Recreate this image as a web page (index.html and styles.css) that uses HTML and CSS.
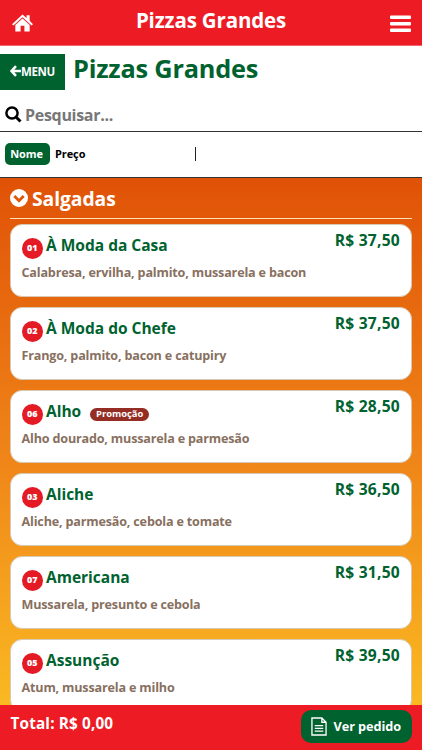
FILE: index.html
```html
<!DOCTYPE html>
<html lang="pt-BR">
<head>
<meta charset="utf-8">
<title>Pizzas Grandes</title>
<link rel="stylesheet" href="styles.css">
</head>
<body>
<header class="topbar">
  <svg class="home" viewBox="0 0 22 18"><path fill="#fff" d="M11 0 15.300 3.700V1H18.500V6.700L22 10.200 20.500 11.600 11 3 1.500 11.600 0 10.200ZM11 4.300 18.500 11.200V18H13V12H9V18H3.500V11.200Z"/></svg>
  <span class="topbar-title">Pizzas Grandes</span>
  <svg class="bars" viewBox="0 0 21 18"><path fill="#fff" d="M1 .5H20a1 1 0 0 1 1 1V3a1 1 0 0 1-1 1H1a1 1 0 0 1-1-1V1.500a1 1 0 0 1 1-1ZM1 7H20a1 1 0 0 1 1 1V9.500a1 1 0 0 1-1 1H1a1 1 0 0 1-1-1V8a1 1 0 0 1 1-1ZM1 13.500H20a1 1 0 0 1 1 1V16a1 1 0 0 1-1 1H1a1 1 0 0 1-1-1V14.500a1 1 0 0 1 1-1Z"/></svg>
</header>
<div class="heading">
  <a class="back"><svg viewBox="0 0 11 12"><path d="M6 1.200 1.500 6 6 10.800M2 6H11" fill="none" stroke="#fff" stroke-width="2.500"/></svg><span>MENU</span></a>
  <h1>Pizzas Grandes</h1>
</div>
<div class="search">
  <svg viewBox="0 0 17 17"><circle cx="7" cy="7" r="5.600" fill="none" stroke="#000" stroke-width="2.500"/><path d="M11 11 15.500 15.500" stroke="#000" stroke-width="3"/></svg>
  <span>Pesquisar...</span>
</div>
<div class="sort"><span class="chip">Nome</span><span class="sort-option">Preço</span><i class="divider"></i></div>
<main class="list">
  <h2 class="section"><svg viewBox="0 0 18 18"><circle cx="9" cy="9" r="9" fill="#fff"/><path d="M4.300 7 9 11.700 13.700 7" fill="none" stroke="#e0560a" stroke-width="2.800"/></svg><span>Salgadas</span></h2>
  <article class="card"><div class="row"><b class="num">01</b><h3>À Moda da Casa</h3><span class="price">R$ 37,50</span></div><p>Calabresa, ervilha, palmito, mussarela e bacon</p></article>
  <article class="card"><div class="row"><b class="num">02</b><h3>À Moda do Chefe</h3><span class="price">R$ 37,50</span></div><p>Frango, palmito, bacon e catupiry</p></article>
  <article class="card"><div class="row"><b class="num">06</b><h3>Alho</h3><em class="promo">Promoção</em><span class="price">R$ 28,50</span></div><p>Alho dourado, mussarela e parmesão</p></article>
  <article class="card"><div class="row"><b class="num">03</b><h3>Aliche</h3><span class="price">R$ 36,50</span></div><p>Aliche, parmesão, cebola e tomate</p></article>
  <article class="card"><div class="row"><b class="num">07</b><h3>Americana</h3><span class="price">R$ 31,50</span></div><p>Mussarela, presunto e cebola</p></article>
  <article class="card"><div class="row"><b class="num">05</b><h3>Assunção</h3><span class="price">R$ 39,50</span></div><p>Atum, mussarela e milho</p></article>
</main>
<footer class="total">
  <span class="sum">Total: R$ 0,00</span>
  <a class="order"><svg viewBox="0 0 17 20"><path d="M1 1H11.500L16 5.500V19H1ZM11.500 1V5.500H16M4 9H13M4 12H13M4 15H13" fill="none" stroke="#fff" stroke-width="1.400"/></svg><span>Ver pedido</span></a>
</footer>
</body>
</html>
```
FILE: styles.css
```css
* { box-sizing: border-box; }
body { margin: 0; width: 422px; height: 750px; overflow: hidden; display: flex; flex-direction: column; background: #fff; font-family: "Open Sans", "Noto Sans", sans-serif; font-weight: 700; white-space: nowrap; }
h1, h2, h3, p { margin: 0; font-weight: 700; }
svg { display: block; flex: none; }
.topbar { flex: none; height: 46px; padding: 0 11px 0 12px; background: #ed1c24; color: #fff; display: flex; justify-content: space-between; align-items: flex-start; border-bottom: 1px solid #f4666b; }
.home { width: 21px; height: 18px; margin-top: 14px; }
.topbar-title { margin-left: -1px; font-size: 20.5px; line-height: 40px; letter-spacing: -.15px; }
.bars { width: 21px; height: 18px; margin-top: 15px; }
.heading { flex: none; height: 53px; display: flex; align-items: flex-start; }
.back { width: 65px; height: 36px; margin-top: 8px; padding: 0 0 2px 10px; background: #00622f; color: #fff; display: flex; align-items: center; font-size: 11.5px; letter-spacing: -.4px; }
.back svg { width: 11px; height: 12px; }
h1 { margin-left: 8px; font-size: 25.3px; line-height: 45px; color: #00622f; letter-spacing: -.2px; }
.search { flex: none; height: 33px; padding: 0 5px; display: flex; align-items: center; border-bottom: 1px solid #333; color: #777; font-size: 16px; letter-spacing: -.3px; }
.search svg { width: 17px; height: 17px; margin: -2px 3px 0 0; }
.sort { flex: none; height: 46px; padding: 11px 5px 0; display: flex; align-items: flex-start; font-size: 11px; line-height: 21px; letter-spacing: -.1px; border-bottom: 1px solid #333; }
.chip { width: 45px; height: 22px; padding-right: 2px; border-radius: 5px; background: #00622f; color: #fff; text-align: center; }
.sort-option { width: 145px; padding-left: 5px; color: #000; }
.divider { width: 1px; height: 14px; margin-top: 4px; background: #222; }
.list { flex: 1; min-height: 0; overflow: hidden; padding: 0 10.5px 0 10px; background: linear-gradient(#e05207, #f08719 55%, #fab922); }
.section { height: 41px; margin-bottom: 5px; border-bottom: 1px solid #ffdfba; display: flex; align-items: center; gap: 4px; color: #fff; font-size: 19.3px; letter-spacing: -.05px; }
.section svg { width: 18px; height: 18px; }
.card { height: 73px; margin-bottom: 10px; padding: 0 10.5px; border: 1px solid #d8c9b5; border-radius: 12px; background: #fff; }
.row { height: 34px; display: flex; align-items: flex-start; }
.num { width: 21.500px; height: 21px; margin-top: 13px; border-radius: 50%; background: #e41b25; color: #fff; font-size: 9px; line-height: 20px; text-align: center; }
h3 { margin-left: 3px; font-size: 15.5px; line-height: 41px; color: #00622f; }
.price { margin-left: auto; font-size: 15.6px; line-height: 31px; color: #00622f; letter-spacing: .25px; }
.promo { width: 59px; height: 13px; margin: 17px 0 0 9px; border-radius: 7px; background: #942d23; color: #fff; font-size: 9.4px; line-height: 12px; font-style: normal; text-align: center; }
.card p { font-size: 12.6px; line-height: 28px; letter-spacing: -.18px; color: #88705f; }
.total { flex: none; height: 45px; padding: 0 10.5px; background: #ed1c24; color: #fff; display: flex; justify-content: space-between; }
.sum { font-size: 15.3px; line-height: 37px; letter-spacing: .15px; }
.order { width: 111px; height: 33px; margin-top: 5px; padding-left: 10px; border-radius: 10px; background: #00622f; display: flex; align-items: center; gap: 7px; font-size: 12.7px; line-height: 30px; letter-spacing: -.05px; }
.order span { margin-top: -2px; }
.order svg { width: 16px; height: 19px; }
```
